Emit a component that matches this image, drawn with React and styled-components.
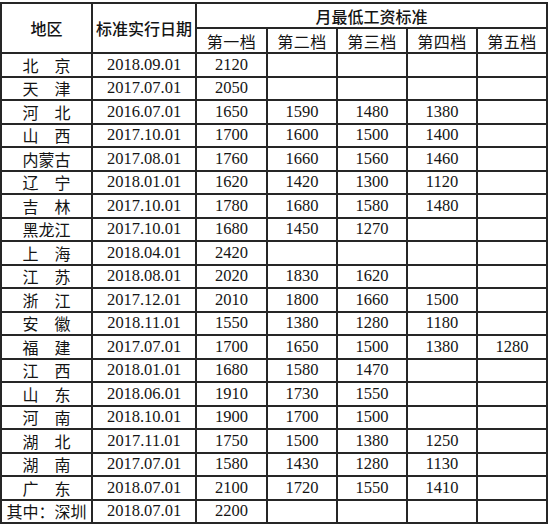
import React from "react";
import styled, { createGlobalStyle } from "styled-components";

const Global = createGlobalStyle`
  html, body { margin: 0; padding: 0; background: #ffffff; }
  body { font-family: "Liberation Serif", "Noto Sans CJK SC", serif; color: #141414; }
`;

const Page = styled.div`
  padding-top: 2px;
  width: 550px;
`;

const Table = styled.table`
  border-collapse: collapse;
  table-layout: fixed;
  width: 548px;
`;

const HeadCell = styled.th`
  border: 2px solid #262626;
  padding: 0;
  height: ${(p) => p.$h}px;
  font-family: "Noto Sans CJK SC", sans-serif;
  font-weight: ${(p) => (p.$tier ? 400 : 500)};
  font-size: 16px;
  line-height: 1;
  text-align: center;
  vertical-align: middle;
  letter-spacing: ${(p) => (p.$tier ? "0.5px" : "0")};
  white-space: nowrap;
  overflow: visible;
`;

const Cell = styled.td`
  border: 2px solid #262626;
  padding: 0;
  height: 21.5px;
  font-family: ${(p) =>
    p.$cjk ? `"Noto Sans CJK SC", sans-serif` : `"Liberation Serif", serif`};
  font-size: ${(p) => (p.$cjk ? 16 : 16.5)}px;
  line-height: 1;
  text-align: center;
  vertical-align: middle;
  white-space: pre;
`;

const widths = [91, 104, 71, 70, 70, 70, 70];

const rows = [
  ["北　京", "2018.09.01", ["2120"]],
  ["天　津", "2017.07.01", ["2050"]],
  ["河　北", "2016.07.01", ["1650", "1590", "1480", "1380"]],
  ["山　西", "2017.10.01", ["1700", "1600", "1500", "1400"]],
  ["内蒙古", "2017.08.01", ["1760", "1660", "1560", "1460"]],
  ["辽　宁", "2018.01.01", ["1620", "1420", "1300", "1120"]],
  ["吉　林", "2017.10.01", ["1780", "1680", "1580", "1480"]],
  ["黑龙江", "2017.10.01", ["1680", "1450", "1270"]],
  ["上　海", "2018.04.01", ["2420"]],
  ["江　苏", "2018.08.01", ["2020", "1830", "1620"]],
  ["浙　江", "2017.12.01", ["2010", "1800", "1660", "1500"]],
  ["安　徽", "2018.11.01", ["1550", "1380", "1280", "1180"]],
  ["福　建", "2017.07.01", ["1700", "1650", "1500", "1380", "1280"]],
  ["江　西", "2018.01.01", ["1680", "1580", "1470"]],
  ["山　东", "2018.06.01", ["1910", "1730", "1550"]],
  ["河　南", "2018.10.01", ["1900", "1700", "1500"]],
  ["湖　北", "2017.11.01", ["1750", "1500", "1380", "1250"]],
  ["湖　南", "2017.07.01", ["1580", "1430", "1280", "1130"]],
  ["广　东", "2018.07.01", ["2100", "1720", "1550", "1410"]],
  ["其中：深圳", "2018.07.01", ["2200"]],
];

const tiers = ["第一档", "第二档", "第三档", "第四档", "第五档"];

export default function App() {
  return (
    <>
      <Global />
      <Page>
        <Table>
          <colgroup>
            {widths.map((w, i) => (
              <col key={i} style={{ width: w }} />
            ))}
          </colgroup>
          <thead>
            <tr>
              <HeadCell rowSpan={2} $h={23}>地区</HeadCell>
              <HeadCell rowSpan={2} $h={23}>标准实行日期</HeadCell>
              <HeadCell colSpan={5} $h={23}>月最低工资标准</HeadCell>
            </tr>
            <tr>
              {tiers.map((t) => (
                <HeadCell key={t} $h={23} $tier>
                  {t}
                </HeadCell>
              ))}
            </tr>
          </thead>
          <tbody>
            {rows.map(([name, date, vals]) => (
              <tr key={name}>
                <Cell $cjk>{name}</Cell>
                <Cell>{date}</Cell>
                {[0, 1, 2, 3, 4].map((i) => (
                  <Cell key={i}>{vals[i] || ""}</Cell>
                ))}
              </tr>
            ))}
          </tbody>
        </Table>
      </Page>
    </>
  );
}
